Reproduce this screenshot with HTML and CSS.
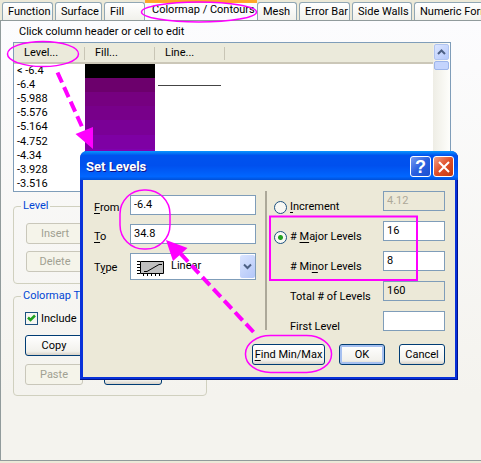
FILE: index.html
```html
<!DOCTYPE html>
<html lang="en">
<head>
<meta charset="utf-8">
<title>Plot Details</title>
<link rel="stylesheet" href="styles.css">
</head>
<body>
<main class="window">
  <nav class="tabs">
    <a class="tab tab-function" href="#">Function</a>
    <a class="tab tab-surface" href="#">Surface</a>
    <a class="tab tab-fill" href="#">Fill</a>
    <a class="tab tab-active" href="#">Colormap / Contours</a>
    <a class="tab tab-mesh" href="#">Mesh</a>
    <a class="tab tab-error" href="#">Error Bar</a>
    <a class="tab tab-walls" href="#">Side Walls</a>
    <a class="tab tab-numeric" href="#">Numeric Formats</a>
  </nav>
  <section class="panel">
    <p class="hint">Click column header or cell to edit</p>
    <div class="list">
      <table class="levels">
        <thead><tr><th>Level...</th><th>Fill...</th><th>Line...</th><th class="rest"></th></tr></thead>
        <tbody>
          <tr><td>&lt; -6.4</td><td class="c0"></td><td></td><td></td></tr>
          <tr><td>-6.4</td><td class="c1"></td><td><hr class="line"></td><td></td></tr>
          <tr><td>-5.988</td><td class="c2"></td><td></td><td></td></tr>
          <tr><td>-5.576</td><td class="c3"></td><td></td><td></td></tr>
          <tr><td>-5.164</td><td class="c4"></td><td></td><td></td></tr>
          <tr><td>-4.752</td><td class="c5"></td><td></td><td></td></tr>
          <tr><td>-4.34</td><td class="c6"></td><td></td><td></td></tr>
          <tr><td>-3.928</td><td class="c6"></td><td></td><td></td></tr>
          <tr><td>-3.516</td><td class="c6"></td><td></td><td></td></tr>
        </tbody>
      </table>
      <div class="scroll">
        <button class="scroll-up" aria-label="Scroll up"><svg width="9" height="6" viewBox="0 0 9 6"><path d="M1 5L4.500 1.500L8 5" fill="none" stroke="#4d6185" stroke-width="2"/></svg></button>
        <div class="thumb"></div>
      </div>
    </div>
    <fieldset class="group">
      <legend>Level</legend>
      <button class="btn" disabled>Insert</button>
      <button class="btn" disabled>Delete</button>
    </fieldset>
    <fieldset class="group group-theme">
      <legend>Colormap Theme</legend>
      <label class="check"><input type="checkbox" checked><svg class="tick" width="9" height="9" viewBox="0 0 9 9"><path d="M1 3.500L3.500 6L8 1.500" fill="none" stroke="#21a121" stroke-width="2.500"/></svg>Include</label>
      <button class="btn">Copy</button>
      <div class="pair"><button class="btn" disabled>Paste</button><button class="btn" aria-label="Save"></button></div>
    </fieldset>
  </section>
</main>

<section class="dialog" role="dialog" aria-labelledby="dialog-title">
  <header class="titlebar">
    <h1 id="dialog-title">Set Levels</h1>
    <button class="cap help" aria-label="Help">?</button>
    <button class="cap close" aria-label="Close"><svg width="12" height="12" viewBox="0 0 12 12"><path d="M1 1L11 11M11 1L1 11" stroke="#fff" stroke-width="2"/></svg></button>
  </header>
  <div class="body">
    <div class="columns">
      <div class="range">
        <label for="from"><u>F</u>rom</label><input id="from" type="text" value="-6.4">
        <label for="to"><u>T</u>o</label><input id="to" type="text" value="34.8">
        <label for="type">T<u>y</u>pe</label>
        <div class="combo">
          <select id="type"><option>Linear</option></select>
          <svg class="scale-icon" width="28" height="16" viewBox="0 0 28 16"><path d="M3.500 1.500h23v12h-23z" fill="#c0c0c0" stroke="#000"/><path d="M0 1.500h3M0 4.500h3M0 7.500h3M0 10.500h3M0 13.500h3M6.500 13v3M10.500 13v3M14.500 13v3M18.500 13v3M22.500 13v3" stroke="#000"/><path d="M7 11.500h3l12-7h3" fill="none" stroke="#000"/></svg>
          <span class="drop"><svg width="9" height="7" viewBox="0 0 9 7"><path d="M1 1.500L4.500 5L8 1.500" fill="none" stroke="#4d6185" stroke-width="2"/></svg></span>
        </div>
      </div>
      <div class="divider"></div>
      <div class="counts">
        <input type="radio" name="mode" id="r-inc"><label for="r-inc"><u>I</u>ncrement</label><input type="text" class="off" aria-label="Increment value" value="4.12" disabled>
        <input type="radio" name="mode" id="r-major" checked><label for="r-major"># <u>M</u>ajor Levels</label><input type="text" aria-label="Major levels" value="16">
        <label class="second" for="minor"># Mi<u>n</u>or Levels</label><input type="text" id="minor" value="8">
        <label class="second" for="total">Total # of Levels</label><input type="text" class="readonly" id="total" value="160" readonly>
        <label class="second" for="first">First Level</label><input type="text" id="first" value="">
      </div>
    </div>
    <div class="actions">
      <button class="btn wide"><u>F</u>ind Min/Max</button>
      <button class="btn default">OK</button>
      <button class="btn">Cancel</button>
    </div>
  </div>
</section>

<svg class="marks" width="481" height="463" viewBox="0 0 481 463" aria-hidden="true">
  <g fill="none" stroke="#ff00ff" stroke-width="1.500">
    <ellipse cx="199" cy="12" rx="57.500" ry="10"/>
    <ellipse cx="43" cy="54" rx="35.500" ry="12.500"/>
    <rect x="120" y="190" width="50" height="59" rx="24"/>
    <rect x="245.500" y="335.500" width="86" height="37" rx="25" ry="18"/>
    <path d="M270 216.500H417V280H270z" stroke-width="2"/>
  </g>
  <g stroke="#ff00ff" stroke-width="4" stroke-dasharray="11 5">
    <path d="M57.500 72.500L83 129"/>
    <path d="M253.500 332L179 252"/>
  </g>
  <path d="M93 149L75.500 134L93 127zM166 240L187.500 248L173 261z" fill="#ff00ff"/>
</svg>
</body>
</html>
```
FILE: styles.css
```css
* { box-sizing: border-box; }
body {
  margin: 0;
  position: relative;
  min-height: 100vh;
  overflow: hidden;
  background: #ece9d8;
  font: 11px/14px Roboto, sans-serif;
  color: #000;
}
button, input, select { font: inherit; color: inherit; margin: 0; }
u { text-underline-offset: 2px; }

.window { min-height: 100vh; padding-bottom: 2px; display: flex; flex-direction: column; }
.tabs { display: flex; align-items: flex-end; gap: 2px; height: 21px; padding-left: 2px; overflow: hidden; }
.tab {
  flex: none;
  height: 19px;
  padding: 2px 0 0 5px;
  border: 1px solid #91a7b4;
  border-bottom: 0;
  border-radius: 3px 3px 0 0;
  background: linear-gradient(#fff, #f0f0ea);
  color: #000;
  text-decoration: none;
  white-space: nowrap;
}
.tab-function { width: 51px; }
.tab-surface { width: 47px; }
.tab-fill { width: 41px; margin-right: -2px; }
.tab-active {
  width: 112px;
  height: 21px;
  padding: 0 0 0 7px;
  border: 0;
  border-top: 3px solid #ffa62b;
  border-radius: 0;
  background: #fcfcfe;
  margin-right: -2px;
}
.tab-mesh { width: 40px; }
.tab-error { width: 51px; }
.tab-walls { width: 60px; }
.tab-numeric { flex: 1; min-width: 0; border-right: 0; border-radius: 3px 0 0; overflow: hidden; }

.panel {
  flex: 1;
  border: 1px solid #919b9c;
  border-right: 0;
  margin-top: -1px;
  padding: 3px 30px 0 12px;
  background: linear-gradient(#fcfcfe, #f4f3ee 85%);
}
.hint { margin: 0 0 3px 6px; line-height: 15px; }
.list { display: flex; height: 150px; border: 1px solid #7f9db9; background: #fff; }
.levels { flex: 1; border-collapse: separate; border-spacing: 0; table-layout: fixed; }
.levels th {
  width: 70px;
  height: 21px;
  padding: 0 0 0 10px;
  background: #ebeadb linear-gradient(#c8c5b5, #c8c5b5) right 4px / 1px 13px no-repeat;
  border-bottom: 2px solid #cbc7b8;
  font-weight: normal;
  text-align: left;
}
.levels th:first-child { width: 71px; }
.levels th.rest { width: auto; background-image: none; }
.levels td { height: 14px; padding: 0 0 0 3px; }
.line { height: 1px; margin: 0 4px 0 0; border: 0; background: #444; }
.c0 { background: #000; }
.c1 { background: #6c006c; }
.c2 { background: #760080; }
.c3 { background: #78008a; }
.c4 { background: #7a0096; }
.c5 { background: #7e00a4; }
.c6 { background: #8000b0; }
.scroll { width: 17px; padding: 1px 0; background: linear-gradient(90deg, #eeede5, #fefefb); }
.scroll-up {
  display: grid;
  place-items: center;
  width: 15px;
  height: 16px;
  margin-left: 1px;
  padding: 0;
  border: 1px solid #b0c4f0;
  border-radius: 2px;
  background: linear-gradient(135deg, #dbe5ff, #b5c9fb);
}
.thumb { width: 15px; height: 9px; margin: 1px 0 0 1px; border: 1px solid #9db5ea; border-radius: 2px; background: #c4d4fd; }

.group {
  width: 194px;
  margin: 7px 0 0;
  padding: 10px 12px 11px;
  border: 1px solid #d0d0bf;
  border-radius: 4px;
  display: flex;
  flex-direction: column;
  gap: 7px;
}
.group legend { margin-left: -5px; padding: 0 2px; color: #0046d5; }
.group-theme { margin-top: 5px; padding: 9px 11px 10px; gap: 8px; }
.group-theme legend { margin-left: -4px; }
.check { display: flex; align-items: center; gap: 3px; height: 13px; margin-bottom: 2px; position: relative; }
.check input { appearance: none; width: 13px; height: 13px; border: 1px solid #1c5180; background: #f6f6f2; }
.tick { position: absolute; left: 2px; top: 2px; }
.pair { display: flex; gap: 21px; }
.btn {
  flex: none;
  width: 58px;
  height: 21px;
  padding: 0;
  border: 1px solid #003c74;
  border-radius: 3px;
  background: linear-gradient(#fff, #f2f1ec 80%, #d8d2c8);
  white-space: nowrap;
}
.btn:disabled { border-color: #c9c7ba; background: #f5f4ea; color: #a1a192; }

.dialog {
  position: absolute;
  left: 80px;
  right: 23px;
  top: 151px;
  border-radius: 7px 7px 0 0;
  padding: 0 3px 3px;
  background: #0831d9;
  box-shadow: inset -1px -1px #00138c;
}
.titlebar {
  display: flex;
  align-items: center;
  gap: 2px;
  height: 29px;
  margin: 0 -3px;
  padding: 2px 4px 0 6px;
  border-radius: 7px 7px 0 0;
  background: linear-gradient(#0997ff, #0053ee 15%, #0050ee 50%, #06f 88%, #0050d8);
}
.titlebar h1 { flex: 1; margin: 0; font: bold 13px/20px Roboto, sans-serif; color: #fff; text-shadow: 1px 1px #0f1089; }
.cap {
  display: grid;
  place-items: center;
  width: 21px;
  height: 21px;
  padding: 0;
  border: 1px solid #fff;
  border-radius: 3px;
  color: #fff;
  background: linear-gradient(135deg, #7a9cf0, #2a5fe0 50%, #1c4fd0);
}
.help { font: bold 18px/18px "Liberation Sans", sans-serif; }
.close { background: linear-gradient(135deg, #f0a088, #e04e28 50%, #c03a10); }
.body { padding: 11px 10px 12px 11px; background: #ece9d8; }
.columns { display: flex; align-items: flex-start; }
.range {
  flex: 1;
  display: grid;
  grid-template-columns: 36px 1fr;
  row-gap: 9px;
  padding-top: 4px;
  align-items: center;
}
.range label { padding-top: 5px; }
.range label[for="type"] { padding-top: 2px; }
input[type="text"] {
  width: 100%;
  height: 20px;
  padding: 0 3px 2px;
  border: 1px solid #7f9db9;
  border-radius: 0;
  background: #fff;
}
input[type="text"].off, input[type="text"].readonly { background: #ece9d8; }
input[type="text"].off { color: #aca899; }
.combo { position: relative; }
.combo select {
  appearance: none;
  display: block;
  width: 100%;
  height: 27px;
  padding: 0 18px 1px 40px;
  border: 1px solid #7f9db9;
  border-radius: 0;
  background: #fff;
}
.scale-icon { position: absolute; left: 7px; top: 7px; pointer-events: none; }
.drop {
  position: absolute;
  right: 1px;
  top: 2px;
  bottom: 2px;
  width: 15px;
  display: grid;
  place-items: center;
  border-radius: 2px;
  background: linear-gradient(135deg, #dbe5ff, #b2c6f8);
  pointer-events: none;
}
.divider { width: 2px; height: 139px; margin: 0 7px 0 9px; background: #aca899; }
.counts {
  flex: none;
  display: grid;
  grid-template-columns: 16px 93px 62px;
  grid-auto-rows: 20px;
  row-gap: 10px;
  align-items: center;
}
.counts label { padding-top: 12px; white-space: nowrap; }
.counts .second { grid-column: 2; }
.counts input[type="radio"] {
  appearance: none;
  width: 13px;
  height: 13px;
  margin-top: 12px;
  border: 1px solid #1c5180;
  border-radius: 50%;
  background: #f8f8f4;
}
.counts input[type="radio"]:checked { background: radial-gradient(circle, #21a121 0 2px, #f8f8f4 3px); }
.actions { display: flex; justify-content: flex-end; gap: 14px; margin: 13px 0 0; }
.actions .btn { width: 46px; }
.actions .wide { width: 73px; }
.actions .default { box-shadow: inset 0 0 0 2px #a6c0f0; }
.marks { position: absolute; left: 0; top: 0; pointer-events: none; }
```
